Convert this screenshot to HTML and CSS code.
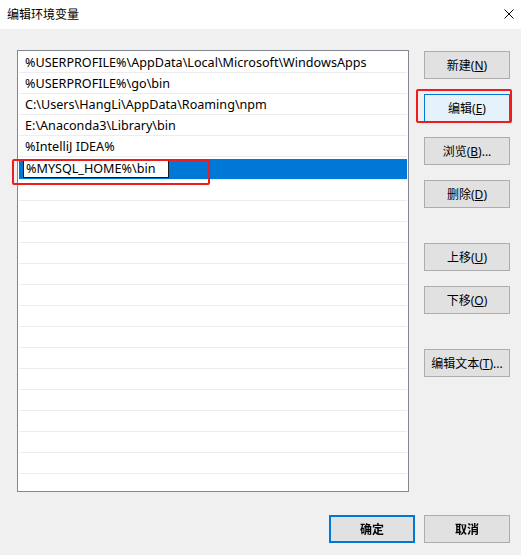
FILE: index.html
```html
<!DOCTYPE html>
<html>
<head>
  <title>编辑环境变量</title>
  <link rel="stylesheet" href="styles.css">
</head>
<body>
  <div class="titlebar">
    <span class="title">编辑环境变量</span>
    <svg class="close" width="10" height="10" viewBox="0 0 10 10">
      <path d="M0.5 0.5 L9.5 9.5 M9.5 0.5 L0.5 9.5" stroke="#000" stroke-width="1" fill="none"/>
    </svg>
  </div>

  <div class="dialog">
    <div class="main">
      <div class="pathlist">
        <div class="row">%USERPROFILE%\AppData\Local\Microsoft\WindowsApps</div>
        <div class="row">%USERPROFILE%\go\bin</div>
        <div class="row">C:\Users\HangLi\AppData\Roaming\npm</div>
        <div class="row">E:\Anaconda3\Library\bin</div>
        <div class="row">%IntelliJ IDEA%</div>
        <div class="row selected">
          <span class="editor">%MYSQL_HOME%\bin</span>
          <span class="mark mark-row"></span>
        </div>
        <div class="row"></div>
        <div class="row"></div>
        <div class="row"></div>
        <div class="row"></div>
        <div class="row"></div>
        <div class="row"></div>
        <div class="row"></div>
        <div class="row"></div>
        <div class="row"></div>
        <div class="row"></div>
        <div class="row"></div>
        <div class="row"></div>
        <div class="row"></div>
        <div class="row"></div>
        <div class="row"></div>
      </div>

      <div class="actions">
        <div class="group">
          <button class="btn">新建(<u>N</u>)</button>
          <div class="marked">
            <button class="btn btn-focus">编辑(<u>E</u>)</button>
            <span class="mark mark-btn"></span>
          </div>
          <button class="btn">浏览(<u>B</u>)...</button>
          <button class="btn">删除(<u>D</u>)</button>
        </div>
        <div class="group">
          <button class="btn">上移(<u>U</u>)</button>
          <button class="btn">下移(<u>O</u>)</button>
        </div>
        <div class="group">
          <button class="btn">编辑文本(<u>T</u>)...</button>
        </div>
      </div>
    </div>

    <div class="footer">
      <button class="btn btn-default"><span class="smudge">确定</span></button>
      <button class="btn"><span class="smudge">取消</span></button>
    </div>
  </div>
</body>
</html>
```

FILE: styles.css
```css
body {
  margin: 0;
  background: #f0f0f0;
  font-family: "Noto Sans", "Noto Sans CJK SC", sans-serif;
  font-size: 12px;
  color: #000;
}

.titlebar {
  height: 29px;
  background: #fff;
  display: flex;
  align-items: center;
  justify-content: space-between;
  padding: 0 7px 2px 7px;
  box-sizing: border-box;
}

.close {
  margin-top: 1px;
}

.dialog {
  padding: 21px 11px 0 17px;
}

.main {
  display: flex;
  gap: 15px;
}

/* path list */
.pathlist {
  width: 392px;
  height: 442px;
  box-sizing: border-box;
  border: 1px solid #828790;
  padding: 1px;
  background: #fff;
  font-size: 12.6px;
}

.row {
  position: relative;
  height: 20px;
  line-height: 21px;
  padding-left: 6px;
  border-bottom: 1px solid #ededed;
  white-space: nowrap;
}

.row:last-child {
  border-bottom: none;
}

.row.selected {
  background: #0078d7;
  padding-left: 4px;
}

.editor {
  display: block;
  width: 146px;
  height: 19px;
  margin-top: 2px;
  box-sizing: border-box;
  border: 1px solid #1a1a1a;
  background: #fff;
  padding-left: 2px;
  line-height: 17px;
}

/* red annotation frames */
.mark {
  position: absolute;
  box-sizing: border-box;
  border: 2px solid #ee1c1c;
  border-radius: 2px;
  pointer-events: none;
}

.mark-row {
  left: -7px;
  top: 0;
  width: 198px;
  height: 26px;
}

.marked {
  position: relative;
}

.mark-btn {
  left: -8px;
  top: -5px;
  width: 96px;
  height: 34px;
}

/* buttons */
.actions {
  display: flex;
  flex-direction: column;
  gap: 35px;
  padding-top: 1px;
}

.group {
  display: flex;
  flex-direction: column;
  gap: 15px;
}

.btn {
  width: 86px;
  height: 28px;
  box-sizing: border-box;
  border: 1px solid #adadad;
  background: #e1e1e1;
  font-family: inherit;
  font-size: 12px;
  color: #000;
  padding: 0;
  margin: 0;
}

.btn u {
  text-underline-offset: 1px;
}

.btn-focus {
  background: #e5f1fb;
  border-color: #0078d7;
}

.footer {
  display: flex;
  justify-content: flex-end;
  gap: 9px;
  margin-top: 23px;
}

.btn-default {
  border: 2px solid #0078d7;
}

.smudge {
  font-weight: bold;
  filter: blur(0.6px);
}
```
